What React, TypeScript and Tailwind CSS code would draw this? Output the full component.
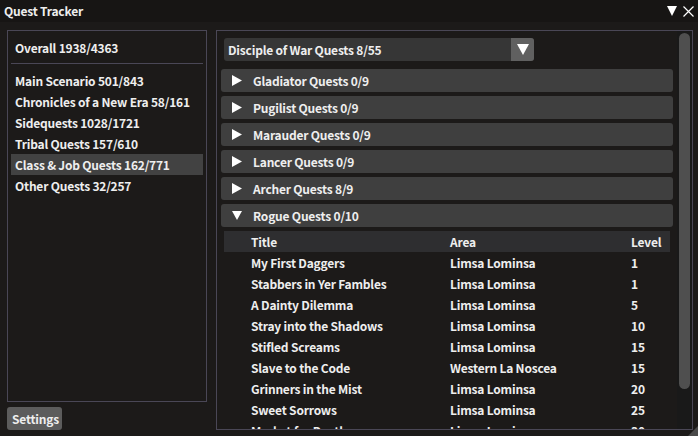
import React from "react";

type Quest = { title: string; area: string; level: number };

const categories = [
  "Main Scenario 501/843",
  "Chronicles of a New Era 58/161",
  "Sidequests 1028/1721",
  "Tribal Quests 157/610",
  "Class & Job Quests 162/771",
  "Other Quests 32/257",
];

const sections = [
  "Gladiator Quests 0/9",
  "Pugilist Quests 0/9",
  "Marauder Quests 0/9",
  "Lancer Quests 0/9",
  "Archer Quests 8/9",
];

const quests: Quest[] = [
  { title: "My First Daggers", area: "Limsa Lominsa", level: 1 },
  { title: "Stabbers in Yer Fambles", area: "Limsa Lominsa", level: 1 },
  { title: "A Dainty Dilemma", area: "Limsa Lominsa", level: 5 },
  { title: "Stray into the Shadows", area: "Limsa Lominsa", level: 10 },
  { title: "Stifled Screams", area: "Limsa Lominsa", level: 15 },
  { title: "Slave to the Code", area: "Western La Noscea", level: 15 },
  { title: "Grinners in the Mist", area: "Limsa Lominsa", level: 20 },
  { title: "Sweet Sorrows", area: "Limsa Lominsa", level: 25 },
  { title: "Market for Death", area: "Limsa Lominsa", level: 30 },
];

function Tri({ open }: { open?: boolean }) {
  return (
    <svg width="10" height="11" viewBox="0 0 10 11" className="shrink-0">
      {open ? (
        <polygon points="0,1 10,1 5,10" fill="#ffffff" />
      ) : (
        <polygon points="0,0 10,5.5 0,11" fill="#ffffff" />
      )}
    </svg>
  );
}

function App() {
  return (
    <div className="flex h-[436px] w-[698px] flex-col overflow-hidden bg-[#1c1a19] text-[12px] font-semibold tracking-[-0.2px] text-[#eeeeee] [font-family:'Noto_Sans_CJK_JP','Noto_Sans',sans-serif]">
      {/* title bar */}
      <div className="flex h-[22px] shrink-0 items-center justify-between bg-[#171514] pl-[4px] pr-[4px]">
        <span className="leading-[22px]">Quest Tracker</span>
        <div className="flex items-center gap-[6px]">
          <svg width="10" height="10" viewBox="0 0 10 10">
            <polygon points="0,0 10,0 5,10" fill="#ffffff" />
          </svg>
          <svg width="11" height="11" viewBox="0 0 11 11">
            <path d="M0.5 0.5 L10.5 10.5 M10.5 0.5 L0.5 10.5" stroke="#ffffff" strokeWidth="1.2" />
          </svg>
        </div>
      </div>

      <div className="relative flex min-h-0 flex-1 gap-[9px] pl-[7px] pr-[5px] pt-[8px] pb-[6px]">
        {/* left column */}
        <div className="flex w-[200px] shrink-0 flex-col gap-[5px]">
          <div className="flex h-[373px] flex-col border border-[#4a4756] px-[3px] pt-[7px]">
            <div className="h-[20px] pl-[4px] leading-[20px]">Overall 1938/4363</div>
            <div className="mt-[5px] mb-[6px] h-px bg-[#4a4756]" />
            {categories.map((c, i) => (
              <div
                key={c}
                className={`h-[21px] whitespace-nowrap pl-[4px] leading-[21px] ${i === 4 ? "bg-[#424242]" : ""}`}
              >
                {c}
              </div>
            ))}
          </div>
          <div className="h-[23px] w-[55px] rounded-[3px] bg-[#5c5c5c] pl-[5px] leading-[23px]">
            Settings
          </div>
        </div>

        {/* right panel */}
        <div className="flex min-w-0 flex-1 border border-[#4a4756]">
          <div className="flex min-w-0 flex-1 flex-col overflow-hidden pl-[4px] pr-[4px] pt-[7px]">
            <div className="ml-[3px] flex h-[23px] w-[310px] shrink-0 items-stretch overflow-hidden rounded-[3px] bg-[#363636]">
              <div className="flex-1 pl-[4px] leading-[23px]">Disciple of War Quests 8/55</div>
              <div className="flex w-[23px] items-center justify-center bg-[#606060]">
                <svg width="12" height="11" viewBox="0 0 12 11">
                  <polygon points="0,0 12,0 6,11" fill="#ffffff" />
                </svg>
              </div>
            </div>

            <div className="mt-[8px] flex flex-col gap-[4px]">
              {sections.map((s) => (
                <div
                  key={s}
                  className="flex h-[23px] shrink-0 items-center rounded-[3px] bg-[#3f3f3f] pl-[11px]"
                >
                  <Tri />
                  <span className="ml-[11px] leading-[23px]">{s}</span>
                </div>
              ))}
              <div className="flex h-[23px] shrink-0 items-center rounded-[3px] bg-[#3f3f3f] pl-[11px]">
                <Tri open />
                <span className="ml-[11px] leading-[23px]">Rogue Quests 0/10</span>
              </div>
            </div>

            <div className="ml-[3px] mr-[3px] mt-[4px] flex flex-col">
              <div className="grid h-[21px] shrink-0 grid-cols-[226px_181px_1fr] bg-[#2e2e30] leading-[21px]">
                <span className="pl-[27px]">Title</span>
                <span>Area</span>
                <span>Level</span>
              </div>
              {quests.map((q) => (
                <div
                  key={q.title}
                  className="grid h-[21px] shrink-0 grid-cols-[226px_181px_1fr] leading-[21px]"
                >
                  <span className="pl-[27px]">{q.title}</span>
                  <span>{q.area}</span>
                  <span>{q.level}</span>
                </div>
              ))}
            </div>
          </div>

          {/* scrollbar */}
          <div className="flex w-[15px] shrink-0 flex-col bg-[#191919] px-[2px] pt-[2px]">
            <div className="h-[356px] rounded-full bg-[#4f4f4f]" />
          </div>
        </div>

        {/* resize grip */}
        <svg width="10" height="10" viewBox="0 0 10 10" className="absolute bottom-0 right-0">
          <polygon points="10,0 10,10 0,10" fill="#4a4a4a" />
        </svg>
      </div>
    </div>
  );
}

export default App;
